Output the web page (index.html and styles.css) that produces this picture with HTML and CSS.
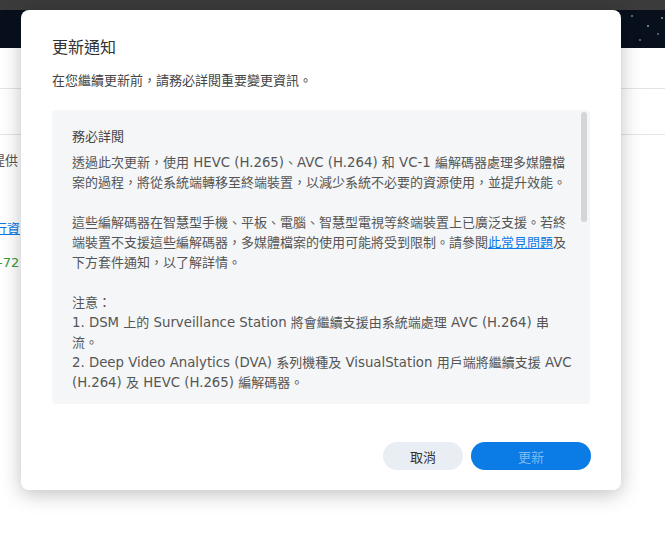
FILE: index.html
```html
<!DOCTYPE html>
<html lang="zh-Hant">
<head>
    <meta charset="UTF-8">
    <meta name="viewport" content="width=device-width, initial-scale=1.0">
    <title>更新通知</title>
    <link rel="stylesheet" href="styles.css">
</head>
<body>
    <div class="topBar"></div>
    <div class="banner"></div>

    <!-- page behind the dialog -->
    <div class="page">
        <div class="pageRow"></div>
        <div class="pageRow"></div>
        <p class="pageText">提供</p>
        <p class="pageLink"><a href="#">行資</a></p>
        <p class="pageVersion">-72</p>
    </div>

    <div class="dialog">
        <h2 class="dialogTitle">更新通知</h2>
        <p class="dialogIntro">在您繼續更新前，請務必詳閱重要變更資訊。</p>

        <div class="noticeWrap">
            <div class="noticeBox">
                <p class="noticeHead">務必詳閱</p>
                <p>透過此次更新，使用<span class="en"> HEVC (H.265)</span>、<span class="en">AVC (H.264) </span>和<span class="en"> VC-1 </span>編解碼器處理多媒體檔案的過程，將從系統端轉移至終端裝置，以減少系統不必要的資源使用，並提升效能。</p>
                <p>這些編解碼器在智慧型手機、平板、電腦、智慧型電視等終端裝置上已廣泛支援。若終端裝置不支援這些編解碼器，多媒體檔案的使用可能將受到限制。請參閱<a href="#">此常見問題</a>及下方套件通知，以了解詳情。</p>
                <p>注意：<br><span class="en">1. DSM </span>上的<span class="en"> Surveillance Station </span>將會繼續支援由系統端處理<span class="en"> AVC (H.264) </span>串流。<br><span class="en">2. Deep Video Analytics (DVA) </span>系列機種及<span class="en"> VisualStation </span>用戶端將繼續支援<span class="en"> AVC (H.264) </span>及<span class="en"> HEVC (H.265) </span>編解碼器。</p>
            </div>
            <div class="scrollThumb"></div>
        </div>

        <div class="dialogFooter">
            <button class="btnCancel">取消</button>
            <button class="btnUpdate">更新</button>
        </div>
    </div>
</body>
</html>
```

FILE: styles.css
```css
body {
    margin: 0;
    font-family: "DejaVu Sans", "Noto Sans CJK TC", sans-serif;
    background: #ffffff;
    width: 665px;
    height: 546px;
    overflow: hidden;
    position: relative;
}

.topBar {
    height: 10px;
    background: #3b3b3b;
}

/* dark header with a few stars */
.banner {
    height: 38px;
    background:
        radial-gradient(circle at 632px 6px, #5a6a7a 0 1px, transparent 1.5px),
        radial-gradient(circle at 648px 16px, #6c7b8a 0 1px, transparent 1.5px),
        radial-gradient(circle at 658px 24px, #4d5c6b 0 1px, transparent 1.5px),
        radial-gradient(circle at 640px 30px, #56636f 0 1px, transparent 1.5px),
        radial-gradient(circle at 662px 8px, #6a7886 0 1px, transparent 1.5px),
        #07101c;
}

.page {
    padding-top: 40px;
    font-size: 13px;
    color: #555;
}

.pageRow {
    height: 45px;
    border-top: 1px solid #e3e3e3;
}

.pageText {
    margin: -29px 0 0 -8px;
    line-height: 20px;
}

.pageLink {
    margin: 48px 0 0 -6px;
    line-height: 20px;
}

.pageLink a {
    color: #0a7ae6;
}

.pageVersion {
    margin: 14px 0 0 -2px;
    line-height: 20px;
    color: #3a9a3a;
}

/* update dialog */
.dialog {
    position: absolute;
    top: 10px;
    left: 21px;
    width: 600px;
    height: 480px;
    box-sizing: border-box;
    padding: 26px 31px 20px;
    background: #ffffff;
    border-radius: 8px;
    box-shadow: 0 4px 20px rgba(0, 0, 0, 0.25);
    display: flex;
    flex-direction: column;
}

.dialogTitle {
    margin: 0;
    font-size: 16px;
    font-weight: normal;
    line-height: 24px;
    color: #333;
}

.dialogIntro {
    margin: 11px 0 0;
    font-size: 13px;
    line-height: 20px;
    color: #444;
}

.noticeWrap {
    position: relative;
    margin-top: 19px;
}

.noticeBox {
    height: 294px;
    box-sizing: border-box;
    padding: 17px 17px 14px 20px;
    background: #f4f6f8;
    border-radius: 4px;
    overflow: hidden;
    font-size: 13px;
    line-height: 20px;
    color: #555;
}

.scrollThumb {
    position: absolute;
    top: 2px;
    right: 3px;
    width: 6px;
    height: 110px;
    background: #d3d5d8;
    border-radius: 3px;
}

.noticeBox p {
    margin: 0 0 20px;
}

.noticeBox .noticeHead {
    margin: 0 0 6px;
    color: #444;
}

.noticeBox .en {
    font-size: 13.3px;
    line-height: 1;
}

.noticeBox a {
    color: #0a7ae6;
}

.dialogFooter {
    margin-top: auto;
    display: flex;
    justify-content: flex-end;
    gap: 8px;
    margin-right: -1px;
}

.dialogFooter button {
    height: 28px;
    border: none;
    border-radius: 14px;
    font-family: inherit;
    font-size: 13px;
    cursor: pointer;
}

.btnCancel {
    width: 80px;
    background: #e9eef5;
    color: #333;
}

.btnUpdate {
    width: 120px;
    background: #0b7be6;
    color: #7fbaf2;
}
```
